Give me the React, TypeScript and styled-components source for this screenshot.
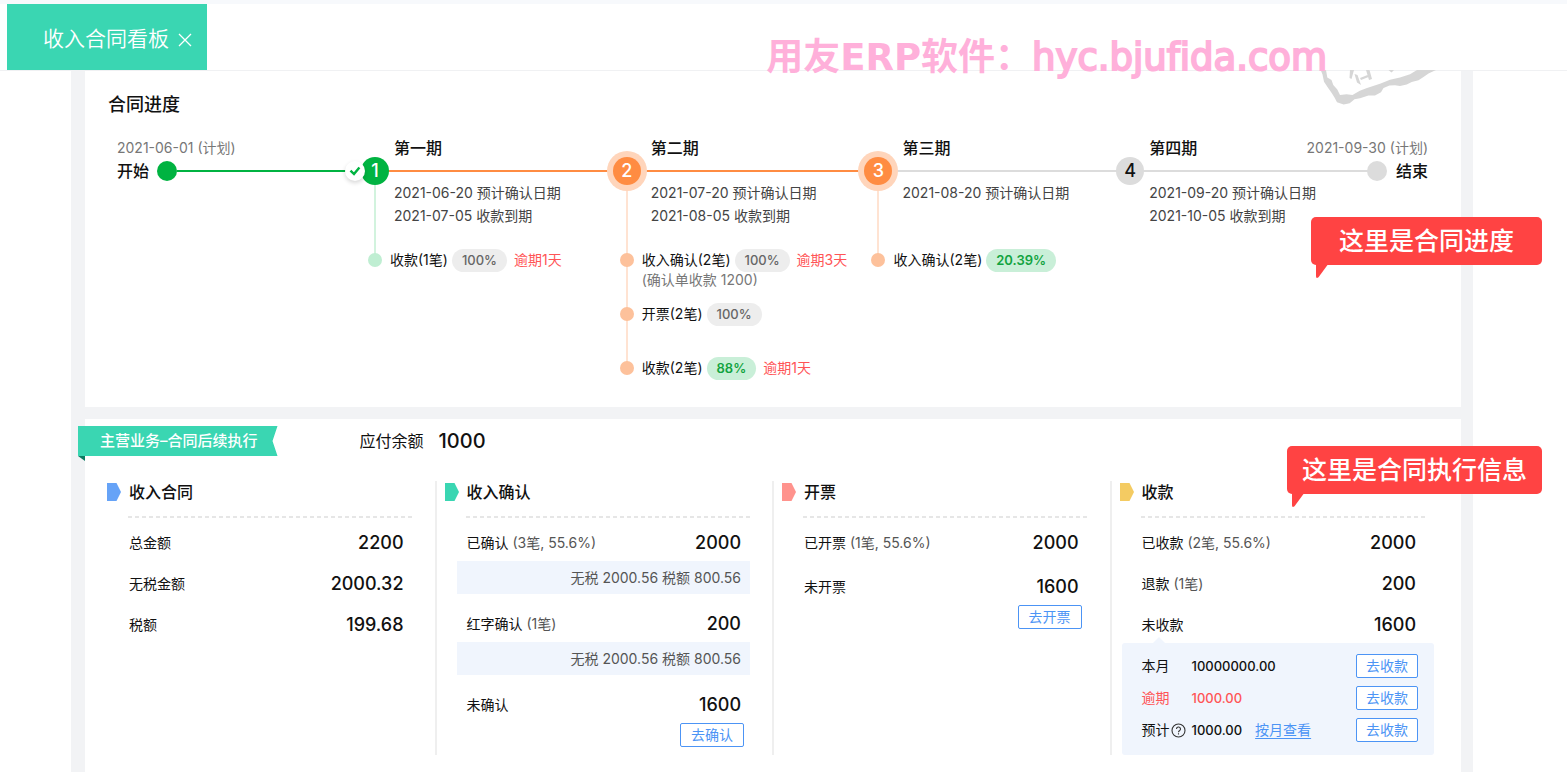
import React from 'react';
import styled, { createGlobalStyle, css } from 'styled-components';

const color = {
  teal: '#3ad6b2',
  green: '#00b341',
  orange: '#ff8c42',
  grey: '#dcdcdc',
  red: '#ff4343',
  warn: '#ff5456',
  blue: '#4c94f5',
  pale: '#f0f5fd',
};

const GlobalStyle = createGlobalStyle`
  *, *::before, *::after { box-sizing: border-box; }
  body {
    margin: 0;
    background: #fff;
    color: #111;
    font-family: Inter, "Noto Sans CJK SC", sans-serif;
    font-size: 14px;
    line-height: 20px;
    overflow-x: hidden;
  }
  h2, h3, h4, p, dl, dt, dd, ul { margin: 0; padding: 0; font-weight: inherit; }
  ul { list-style: none; }
  button { font: inherit; cursor: pointer; }
`;

const Page = styled.div`
  position: relative;
  display: flex;
  flex-direction: column;
  min-height: 100vh;
`;

const TabBar = styled.header`
  display: flex;
  height: 71px;
  padding-left: 7px;
  border-top: 4px solid #f7f9fc;
  border-bottom: 1px solid #f0f1f3;
`;

const Tab = styled.div`
  display: flex;
  align-items: center;
  gap: 8px;
  height: 66px;
  padding: 3px 14px 0 36px;
  background: ${color.teal};
  color: #fff;
  font-size: 21px;
  font-weight: 350;
`;

const CloseButton = styled.button`
  display: flex;
  padding: 2px 1px 0;
  border: 0;
  background: none;
  color: inherit;
`;

const Watermark = styled.div`
  position: absolute;
  top: 34px;
  right: 240px;
  z-index: 3;
  color: #ffb0da;
  font: 700 37px/48px "DejaVu Sans", "Noto Sans CJK SC", sans-serif;
  font-variant-ligatures: none;
  white-space: nowrap;
  pointer-events: none;
`;

const WatermarkDomain = styled.span`
  font-weight: 400;
  -webkit-text-stroke: 2px #ffb0da;
`;

const Board = styled.main`
  display: flex;
  flex: 1;
  flex-direction: column;
  gap: 12px;
  margin: 0 94px 0 71px;
  padding: 0 12px 0 14px;
  background: #f2f3f5;
`;

const Card = styled.section<{ $grow?: boolean }>`
  position: relative;
  background: #fff;
  ${p => p.$grow && css`flex: 1;`}
`;

const CardTitle = styled.h2`
  padding: 20px 23px 18px;
  font-size: 18px;
  font-weight: 500;
  line-height: 28px;
`;

const Stamp = styled.svg`
  position: absolute;
  top: -1px;
  right: 21px;
  width: 120px;
  height: 36px;
  fill: #d6d6d6;
`;

const Callout = styled.div<{ $top: number; $pad: number }>`
  position: absolute;
  top: ${p => p.$top}px;
  right: -81px;
  z-index: 4;
  padding: 0 ${p => p.$pad}px;
  border-radius: 5px;
  background: ${color.red};
  color: #fff;
  font-size: 25px;
  font-weight: 500;
  line-height: 48px;
  white-space: nowrap;
`;

const CalloutTail = styled.svg`
  position: absolute;
  top: 100%;
  left: 5px;
  width: 12px;
  height: 13px;
  fill: ${color.red};
`;

/* ---------- timeline ---------- */

const Timeline = styled.div`
  display: grid;
  grid-template-columns: 258px 252fr 252fr 252fr 247fr 51px;
  padding: 0 33px 39px 32px;
`;

const Stage = styled.div`
  min-width: 0;
  white-space: nowrap;
`;

const StageTitle = styled.h3<{ $indent: number }>`
  margin-bottom: 2px;
  padding-left: ${p => p.$indent}px;
  font-size: 16px;
  font-weight: 500;
  line-height: 22px;
`;

const PlanDate = styled.p<{ $end?: boolean }>`
  display: flex;
  justify-content: ${p => (p.$end ? 'flex-end' : 'flex-start')};
  margin-bottom: 2px;
  color: #777;
  line-height: 22px;
`;

const Track = styled.div`
  display: flex;
  align-items: center;
  height: 20px;
`;

const Line = styled.div<{ $color: string }>`
  flex: 1;
  height: 2px;
  background: ${p => p.$color};
`;

const Terminal = styled.span`
  font-size: 16px;
  font-weight: 500;
`;

const EndDot = styled.span<{ $color: string; $end?: boolean }>`
  flex: none;
  width: 20px;
  height: 20px;
  margin: ${p => (p.$end ? '0 9px 0 -10px' : '0 0 0 8px')};
  border-radius: 50%;
  background: ${p => p.$color};
  z-index: 1;
`;

type State = 'done' | 'active' | 'idle';

const nodeFill = { done: color.green, active: color.orange, idle: color.grey };
const branchFill = { done: '#d2f3de', active: '#ffe3d2', idle: 'transparent' };
const dotFill = { done: '#bfeed2', active: '#fdc19b', idle: color.grey };

const Node = styled.span<{ $state: State }>`
  position: relative;
  z-index: 1;
  flex: none;
  width: 28px;
  height: 28px;
  margin: 0 -14px;
  border-radius: 50%;
  background: ${p => nodeFill[p.$state]};
  color: ${p => (p.$state === 'idle' ? '#111' : '#fff')};
  font-size: 18px;
  font-weight: 500;
  line-height: 28px;
  text-align: center;
  ${p => p.$state === 'active' && css`box-shadow: 0 0 0 6px #ffd5bb;`}
`;

const CheckBadge = styled.span`
  position: absolute;
  top: 4px;
  left: -16px;
  display: flex;
  align-items: center;
  justify-content: center;
  width: 20px;
  height: 20px;
  border-radius: 50%;
  background: #fff;
  box-shadow: 0 2px 4px rgba(0, 0, 0, 0.16);
`;

const Branch = styled.div<{ $state: State }>`
  display: flow-root;
  margin-left: -1px;
  border-left: 2px solid ${p => branchFill[p.$state]};
`;

const Dates = styled.div<{ $indent: number }>`
  min-height: 46px;
  padding-left: ${p => p.$indent - 1}px;
  color: #444;
  line-height: 23px;
`;

const Events = styled.ul`
  padding-top: 21px;
`;

const Event = styled.li`
  min-height: 54px;
  &:last-child { min-height: 0; margin-bottom: -12px; }
`;

const EventRow = styled.div`
  display: flex;
  align-items: center;
  height: 24px;
`;

const EventDot = styled.span<{ $state: State }>`
  width: 14px;
  height: 14px;
  margin: 0 8px 0 -8px;
  border-radius: 50%;
  background: ${p => dotFill[p.$state]};
`;

const Pill = styled.span<{ $good?: boolean }>`
  margin: 0 7px 0 4px;
  padding: 0 10px;
  border-radius: 12px;
  background: ${p => (p.$good ? '#c9efd8' : '#ededed')};
  color: ${p => (p.$good ? '#12a340' : '#666')};
  font-size: 13px;
  font-weight: ${p => (p.$good ? 600 : 500)};
  line-height: 23px;
`;

const Overdue = styled.span`
  color: ${color.warn};
`;

const EventNote = styled.p`
  padding-left: 14px;
  color: #777;
  line-height: 16px;
`;

/* ---------- execution ---------- */

const ExecutionHeader = styled.div`
  display: flex;
  align-items: center;
  padding-top: 7px;
  margin-left: -7px;
`;

const Ribbon = styled.div`
  position: relative;
  &::after {
    content: '';
    position: absolute;
    top: 100%;
    left: 0;
    border-top: 5px solid #0b7c62;
    border-left: 7px solid transparent;
  }
`;

const RibbonLabel = styled.h2`
  padding: 0 20px 0 22px;
  background: ${color.teal};
  clip-path: polygon(0 0, 100% 0, calc(100% - 5px) 50%, 100% 100%, 0 100%);
  color: #fff;
  font-size: 15px;
  font-weight: 500;
  line-height: 30px;
`;

const Balance = styled.p`
  display: flex;
  align-items: center;
  gap: 15px;
  margin-left: 82px;
  font-size: 16px;
`;

const BalanceValue = styled.strong`
  font-size: 20px;
  font-weight: 500;
`;

const Columns = styled.div`
  display: grid;
  grid-template-columns: repeat(4, 1fr);
  padding: 25px 14px 16px 12px;
`;

const Column = styled.section`
  min-height: 274px;
  & + & { border-left: 2px solid #efefef; }
  &:first-child { border-left: 2px solid transparent; }
`;

const ColumnTitle = styled.h3`
  display: flex;
  align-items: center;
  gap: 8px;
  padding-left: 8px;
  font-size: 16px;
  font-weight: 500;
  line-height: 22px;
`;

const Marker = styled.svg`
  width: 14px;
  height: 18px;
`;

const Dashes = styled.div`
  height: 2px;
  margin: 13px 20px 7px 29px;
  background: repeating-linear-gradient(90deg, #e6e6e6 0 4px, transparent 4px 7px);
`;

const Figures = styled.dl<{ $gap: number }>`
  display: flex;
  flex-direction: column;
  gap: ${p => p.$gap}px;
`;

const Figure = styled.div`
  display: flex;
  align-items: center;
  justify-content: space-between;
  height: 36px;
  padding: 0 31px 0 30px;
`;

const Count = styled.span`
  color: #555;
`;

const Value = styled.dd`
  font-size: 18px;
  font-weight: 500;
`;

const TaxBand = styled.p`
  margin: 0 22px 12px 20px;
  padding-right: 9px;
  background: ${color.pale};
  color: #555;
  line-height: 33px;
  text-align: right;
`;

const ActionRow = styled.div`
  display: flex;
  justify-content: flex-end;
  padding-right: 28px;
`;

const ActionButton = styled.button`
  height: 24px;
  padding: 0 10px;
  border: 1px solid ${color.blue};
  border-radius: 2px;
  background: #fff;
  color: ${color.blue};
  line-height: 22px;
`;

const DuePanel = styled.div`
  position: relative;
  margin: 0 13px 0 10px;
  padding: 7px 16px 9px 20px;
  border-radius: 3px;
  background: ${color.pale};
  &::before {
    content: '';
    position: absolute;
    bottom: 100%;
    left: 31px;
    border: 6px solid transparent;
    border-top: 0;
    border-bottom-color: ${color.pale};
  }
`;

const DueRow = styled.div<{ $late?: boolean }>`
  display: flex;
  align-items: center;
  height: 32px;
  ${p => p.$late && css`color: ${color.warn};`}
`;

const DueLabel = styled.span`
  display: flex;
  align-items: center;
  gap: 1px;
  width: 50px;
`;

const DueAmount = styled.span`
  font-size: 13px;
  font-weight: 500;
`;

const MonthLink = styled.a`
  margin-left: 13px;
  color: ${color.blue};
  text-underline-offset: 3px;
`;

const DueAction = styled(ActionButton)`
  margin-left: auto;
  padding: 0 9px;
`;

/* ---------- data ---------- */

interface EventData { label: string; percent: string; good?: boolean; overdue?: string; note?: string; }
interface StageData { title: string; state: State; line: string; dates: string[]; events: EventData[]; }

const stages: StageData[] = [
  {
    title: '第一期', state: 'done', line: color.orange,
    dates: ['2021-06-20 预计确认日期', '2021-07-05 收款到期'],
    events: [{ label: '收款(1笔)', percent: '100%', overdue: '逾期1天' }],
  },
  {
    title: '第二期', state: 'active', line: color.orange,
    dates: ['2021-07-20 预计确认日期', '2021-08-05 收款到期'],
    events: [
      { label: '收入确认(2笔)', percent: '100%', overdue: '逾期3天', note: '(确认单收款 1200)' },
      { label: '开票(2笔)', percent: '100%' },
      { label: '收款(2笔)', percent: '88%', good: true, overdue: '逾期1天' },
    ],
  },
  {
    title: '第三期', state: 'active', line: color.grey,
    dates: ['2021-08-20 预计确认日期'],
    events: [{ label: '收入确认(2笔)', percent: '20.39%', good: true }],
  },
  {
    title: '第四期', state: 'idle', line: color.grey,
    dates: ['2021-09-20 预计确认日期', '2021-10-05 收款到期'],
    events: [],
  },
];

const dues = [
  { label: '本月', amount: '10000000.00' },
  { label: '逾期', amount: '1000.00', late: true },
  { label: '预计', amount: '1000.00', help: true, link: '按月查看' },
];

/* ---------- parts ---------- */

function TimelineStage({ data, index }: { data: StageData; index: number }) {
  const indent = data.state === 'active' ? 24 : 19;
  return (
    <Stage>
      <StageTitle $indent={indent}>{data.title}</StageTitle>
      <Track>
        <Node $state={data.state}>
          {index + 1}
          {data.state === 'done' && (
            <CheckBadge>
              <svg width="12" height="10" viewBox="0 0 12 10" fill="none" stroke={color.green} strokeWidth="2.4">
                <path d="M1.5 4.6 5 8 10.4 1.4" />
              </svg>
            </CheckBadge>
          )}
        </Node>
        <Line $color={data.line} />
      </Track>
      <Branch $state={data.state}>
        <Dates $indent={indent}>
          {data.dates.map(d => <p key={d}>{d}</p>)}
        </Dates>
        {data.events.length > 0 && (
          <Events>
            {data.events.map(e => (
              <Event key={e.label}>
                <EventRow>
                  <EventDot $state={data.state} />
                  {e.label}
                  <Pill $good={e.good}>{e.percent}</Pill>
                  {e.overdue && <Overdue>{e.overdue}</Overdue>}
                </EventRow>
                {e.note && <EventNote>{e.note}</EventNote>}
              </Event>
            ))}
          </Events>
        )}
      </Branch>
    </Stage>
  );
}

function ColumnHead({ title, fill }: { title: string; fill: string }) {
  return (
    <>
      <ColumnTitle>
        <Marker viewBox="0 0 14 18" fill={fill} aria-hidden="true">
          <path d="M0 0h9.500L14 9l-4.500 9H0z" />
        </Marker>
        {title}
      </ColumnTitle>
      <Dashes />
    </>
  );
}

function FigureRow({ label, count, value }: { label: string; count?: string; value: string }) {
  return (
    <Figure>
      <dt>{label}{count && <Count> {count}</Count>}</dt>
      <Value>{value}</Value>
    </Figure>
  );
}

function Note({ top, pad, children }: { top: number; pad: number; children: string }) {
  return (
    <Callout $top={top} $pad={pad}>
      {children}
      <CalloutTail viewBox="0 0 12 13"><path d="M0 0h11.500L2.500 12.200Q0 14 0 11z" /></CalloutTail>
    </Callout>
  );
}

export default function App() {
  return (
    <Page>
      <GlobalStyle />
      <TabBar>
        <Tab>
          收入合同看板
          <CloseButton type="button" aria-label="关闭">
            <svg width="14" height="14" viewBox="0 0 14 14" stroke="currentColor" strokeWidth="1.3">
              <path d="M1 1l12 12M13 1L1 13" />
            </svg>
          </CloseButton>
        </Tab>
      </TabBar>
      <Watermark>用友ERP软件：<WatermarkDomain>hyc.bjufida.com</WatermarkDomain></Watermark>

      <Board>
        <Card>
          <Stamp viewBox="0 0 120 36" aria-hidden="true">
            <path d="M.7 0H6l1.300 7.500L11.500 10l1.800 5 4 4.500L20 25l6.500-.8 6 .8 7.300-4.200L47 18l13-4.300 10-4L80 7.500l10-3.300L97 0h19l-7.500 3.500-5 3.500-5 3.300-6.800 1.700-5 2.500-6.700 1.500-5-.8-5.500.3-6 2.500-2.500 4.300-6 3.200-6.500 0-8.500 2.800-5.500 1-4.800 4-6 1.200-6.700-2.200L14.500 27.500 11.700 23 8 17.800 4 11.700 2.500 4.500z" />
            <path d="M30 0h4l-2.500 9-2-1zM34.500 4l3 1L41 15l-4-2.500zM40 8l10-4 1 2-10 4zM46 0h3.500L52 9l-3 1zM68.500 0H74l-2.500 2.500z" />
          </Stamp>
          <CardTitle>合同进度</CardTitle>
          <Timeline>
            <Stage>
              <PlanDate>2021-06-01 (计划)</PlanDate>
              <Track>
                <Terminal>开始</Terminal>
                <EndDot $color={color.green} />
                <Line $color={color.green} />
              </Track>
            </Stage>
            {stages.map((s, i) => <TimelineStage key={s.title} data={s} index={i} />)}
            <Stage>
              <PlanDate $end>2021-09-30 (计划)</PlanDate>
              <Track>
                <EndDot $color={color.grey} $end />
                <Terminal>结束</Terminal>
              </Track>
            </Stage>
          </Timeline>
          <Note top={146} pad={28}>这里是合同进度</Note>
        </Card>

        <Card $grow>
          <ExecutionHeader>
            <Ribbon><RibbonLabel>主营业务–合同后续执行</RibbonLabel></Ribbon>
            <Balance>应付余额 <BalanceValue>1000</BalanceValue></Balance>
          </ExecutionHeader>
          <Columns>
            <Column>
              <ColumnHead title="收入合同" fill="#66a3f7" />
              <Figures $gap={5}>
                <FigureRow label="总金额" value="2200" />
                <FigureRow label="无税金额" value="2000.32" />
                <FigureRow label="税额" value="199.68" />
              </Figures>
            </Column>
            <Column>
              <ColumnHead title="收入确认" fill={color.teal} />
              <Figures $gap={0}>
                <FigureRow label="已确认" count="(3笔, 55.6%)" value="2000" />
                <TaxBand>无税 2000.56 税额 800.56</TaxBand>
                <FigureRow label="红字确认" count="(1笔)" value="200" />
                <TaxBand>无税 2000.56 税额 800.56</TaxBand>
                <FigureRow label="未确认" value="1600" />
              </Figures>
              <ActionRow><ActionButton type="button">去确认</ActionButton></ActionRow>
            </Column>
            <Column>
              <ColumnHead title="开票" fill="#ff938d" />
              <Figures $gap={8}>
                <FigureRow label="已开票" count="(1笔, 55.6%)" value="2000" />
                <FigureRow label="未开票" value="1600" />
              </Figures>
              <ActionRow><ActionButton type="button">去开票</ActionButton></ActionRow>
            </Column>
            <Column>
              <ColumnHead title="收款" fill="#f4cb62" />
              <Figures $gap={5}>
                <FigureRow label="已收款" count="(2笔, 55.6%)" value="2000" />
                <FigureRow label="退款" count="(1笔)" value="200" />
                <FigureRow label="未收款" value="1600" />
              </Figures>
              <DuePanel>
                {dues.map(d => (
                  <DueRow key={d.label} $late={d.late}>
                    <DueLabel>
                      {d.label}
                      {d.help && (
                        <svg width="15" height="15" viewBox="0 0 15 15" fill="none" stroke="#333" strokeWidth="1.1">
                          <circle cx="7.5" cy="7.5" r="6.5" />
                          <path d="M5.500 6a2 2 0 1 1 3 1.700c-.7.4-1 .7-1 1.500M7.500 10.300v1.200" />
                        </svg>
                      )}
                    </DueLabel>
                    <DueAmount>{d.amount}</DueAmount>
                    {d.link && <MonthLink href="#months">{d.link}</MonthLink>}
                    <DueAction type="button">去收款</DueAction>
                  </DueRow>
                ))}
              </DuePanel>
            </Column>
          </Columns>
          <Note top={27} pad={15}>这里是合同执行信息</Note>
        </Card>
      </Board>
    </Page>
  );
}
